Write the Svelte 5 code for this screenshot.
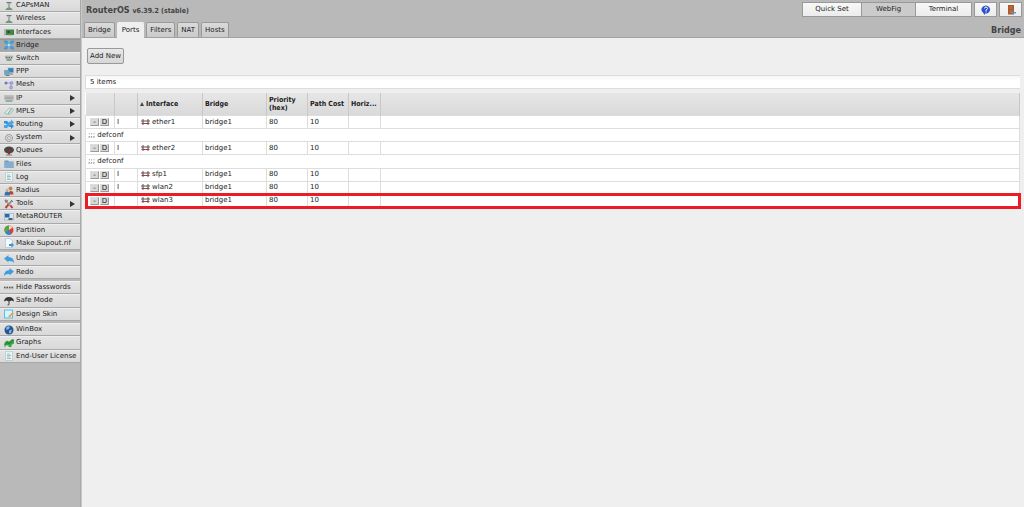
<script>
  const groups = [
    [
      { label: 'CAPsMAN', icon: 'antenna' },
      { label: 'Wireless', icon: 'antenna' },
      { label: 'Interfaces', icon: 'card' },
      { label: 'Bridge', icon: 'bridge', active: true },
      { label: 'Switch', icon: 'switch' },
      { label: 'PPP', icon: 'ppp' },
      { label: 'Mesh', icon: 'mesh' },
      { label: 'IP', icon: 'ip', sub: true },
      { label: 'MPLS', icon: 'mpls', sub: true },
      { label: 'Routing', icon: 'routing', sub: true },
      { label: 'System', icon: 'gear', sub: true },
      { label: 'Queues', icon: 'tree' },
      { label: 'Files', icon: 'folder' },
      { label: 'Log', icon: 'page' },
      { label: 'Radius', icon: 'users' },
      { label: 'Tools', icon: 'tools', sub: true },
      { label: 'MetaROUTER', icon: 'meta' },
      { label: 'Partition', icon: 'pie' },
      { label: 'Make Supout.rif', icon: 'supout' }
    ],
    [
      { label: 'Undo', icon: 'undo' },
      { label: 'Redo', icon: 'redo' }
    ],
    [
      { label: 'Hide Passwords', icon: 'stars' },
      { label: 'Safe Mode', icon: 'umbrella' },
      { label: 'Design Skin', icon: 'design' }
    ],
    [
      { label: 'WinBox', icon: 'globe' },
      { label: 'Graphs', icon: 'graph' },
      { label: 'End-User License', icon: 'page' }
    ]
  ];

  const tabs = ['Bridge', 'Ports', 'Filters', 'NAT', 'Hosts'];

  const rows = [
    { flag: 'I', name: 'ether1' },
    { comment: ';;; defconf' },
    { flag: 'I', name: 'ether2' },
    { comment: ';;; defconf' },
    { flag: 'I', name: 'sfp1' },
    { flag: 'I', name: 'wlan2' },
    { flag: '', name: 'wlan3', marked: true }
  ];

  let tab = $state('Ports');
</script>

{#snippet icon(name)}
  <svg class="icon" viewBox="0 0 20 20" aria-hidden="true">
    {#if name === 'antenna'}
      <path d="M5 3h10M10 3v12" stroke="#777" stroke-width="2" fill="none" />
      <path d="M6 4l4 5 4-5" stroke="#aaa" stroke-width="1.5" fill="none" />
      <path d="M3 18q0-4 7-5 7 1 7 5z" fill="#6f9a72" />
    {:else if name === 'card'}
      <path d="M2 4v13" stroke="#888" stroke-width="2" />
      <rect x="4" y="5" width="16" height="11" fill="#3c8546" />
      <rect x="7" y="8" width="4" height="4" fill="#1d4f25" />
      <path d="M7 16h10" stroke="#9aa860" stroke-width="1.5" />
    {:else if name === 'bridge'}
      <path d="M0 1l8 1-6 6zM20 1l-8 1 6 6zM0 19l8-1-6-6zM20 19l-8-1 6-6z" fill="#2e93d8" />
      <path d="M3 3l14 14M17 3L3 17" stroke="#3d9fdc" stroke-width="4" />
      <circle cx="10" cy="10" r="3" fill="#b9dff5" />
    {:else if name === 'switch'}
      <path d="M2 6h16l-2 6H4z" fill="#bbb" stroke="#999" />
      <path d="M4 9h3M9 9h3M14 9h2" stroke="#666" stroke-width="2" />
      <path d="M5 14h10" stroke="#63996a" stroke-width="3" />
    {:else if name === 'ip'}
      <path d="M1 5h18v8H1z" fill="#c8c8c8" stroke="#aaa" />
      <path d="M4 7v5M8 7v5M12 7v5M16 7v5" stroke="#777" stroke-width="1.5" />
      <path d="M3 16h14" stroke="#7fa384" stroke-width="3" />
    {:else if name === 'ppp'}
      <rect x="8" y="2" width="11" height="9" fill="#2e86bd" stroke="#9ab" />
      <rect x="1" y="7" width="10" height="8" fill="#55acd9" stroke="#888" />
      <path d="M3 17h8M12 14h6" stroke="#777" stroke-width="2" />
    {:else if name === 'mesh'}
      <path d="M4 6h10v10" stroke="#999" stroke-width="1.5" fill="none" />
      <circle cx="4" cy="6" r="3" fill="#7373d2" />
      <circle cx="15" cy="6" r="3" fill="#aaaaf0" stroke="#7777c8" />
      <circle cx="14" cy="15" r="3" fill="#aaaaf0" stroke="#7777c8" />
    {:else if name === 'mpls'}
      <path d="M1 14L11 4l4 1-9 12zM8 16L17 5l2 3-8 9z" fill="#dcebe5" stroke="#8dafa4" stroke-width="1.5" />
    {:else if name === 'routing'}
      <path d="M0 4h6l8 8V9l6 5-6 6v-4h-3L4 9H0z" fill="#2f91d8" />
      <path d="M0 18h6l8-8v3l6-6-6-6v4h-3l-7 7H0z" fill="#48a5e8" />
    {:else if name === 'gear'}
      <circle cx="10" cy="10" r="7" fill="#d5d5d5" stroke="#888" stroke-width="2" stroke-dasharray="3 1" />
      <circle cx="10" cy="10" r="3" fill="#eee" stroke="#999" stroke-width="1.5" />
    {:else if name === 'tree'}
      <ellipse cx="10" cy="8" rx="10" ry="7" fill="#4a4744" />
      <path d="M8 7h4v10H8z" fill="#8a3030" />
      <path d="M4 18h12" stroke="#777" stroke-width="2" />
    {:else if name === 'folder'}
      <path d="M1 3h7l2 2h9v13H1z" fill="#7299bb" />
      <path d="M1 6h18v12H1z" fill="#86add0" />
    {:else if name === 'page'}
      <path d="M3 1h14v18H3z" fill="#e9f4f4" stroke="#9bbcbd" />
      <path d="M6 6h6M6 9h8M6 12h6M6 15h8" stroke="#86aeb0" stroke-width="1.5" />
    {:else if name === 'users'}
      <circle cx="13" cy="5" r="4" fill="#b98b4d" />
      <path d="M9 17q0-7 5-7t5 7z" fill="#b64335" />
      <circle cx="6" cy="8" r="3" fill="#d7b183" />
      <path d="M1 19q0-8 5-8t6 8z" fill="#3173b5" />
    {:else if name === 'tools'}
      <path d="M4 4l13 14" stroke="#999" stroke-width="3" />
      <path d="M16 3l-6 7" stroke="#888" stroke-width="3" />
      <path d="M9 11l-6 7M13 13l4 5" stroke="#c3423e" stroke-width="4" />
      <path d="M2 2l5 1-3 4zM14 2l4 4" stroke="#777" stroke-width="2" fill="none" />
    {:else if name === 'meta'}
      <rect x="1" y="3" width="18" height="13" fill="#dce7f3" stroke="#8199b6" />
      <rect x="2" y="4" width="9" height="7" fill="#246bb1" />
      <path d="M9 14h8" stroke="#333" stroke-width="3" />
    {:else if name === 'pie'}
      <circle cx="10" cy="10" r="9" fill="#e23d39" />
      <path d="M10 10V1a9 9 0 0 0-7 15z" fill="#47ad49" />
      <path d="M10 10l-7 6a9 9 0 0 0 12 2z" fill="#3184cf" />
      <path d="M10 10V1a9 9 0 0 1 7 4z" fill="#f2d4c8" />
    {:else if name === 'supout'}
      <path d="M3 1h9l5 5v13H3z" fill="#f4f9fd" stroke="#8eb2cb" />
      <path d="M10 12h5V9l5 5-5 5v-3h-5z" fill="#3795d8" />
    {:else if name === 'undo'}
      <path d="M0 9l9-7v4q11 0 11 12-3-5-11-4v3z" fill="#419ddd" />
    {:else if name === 'redo'}
      <path d="M20 9l-9-7v4Q0 6 0 18q3-5 11-4v3z" fill="#419ddd" />
    {:else if name === 'stars'}
      <path d="M0 7h20v6H0z" fill="#ccc" />
      <path d="M0 9h20" stroke="#555" stroke-width="3" stroke-dasharray="3 2" />
    {:else if name === 'umbrella'}
      <path d="M0 11Q1 2 10 2t10 9l-5-2-5 2-5-2z" fill="#333" />
      <path d="M10 2v14q0 3-3 2" stroke="#444" stroke-width="2" fill="none" />
    {:else if name === 'design'}
      <rect x="1" y="2" width="16" height="16" fill="#d9f3fc" stroke="#55bfe6" stroke-width="2" />
      <path d="M8 15L17 6l3 3-9 8z" fill="#d7ae51" />
    {:else if name === 'globe'}
      <circle cx="10" cy="10" r="9" fill="#24558f" />
      <path d="M4 5q4-4 8-2l-2 5-5 2zM10 11l6-2-2 7-4 1z" fill="#82b7e5" />
    {:else if name === 'graph'}
      <path d="M1 9l5-4 4 2 7-5 3 1v8l-5 3v4H1z" fill="#37a647" />
      <path d="M1 14l5-5 4 2 8-7" stroke="#19752b" stroke-width="2" fill="none" />
      <path d="M3 15h6v3H3z" fill="#d9efdb" />
    {/if}
  </svg>
{/snippet}

<div class="page">
  <nav class="menu">
    {#each groups as group, i}
      <ul class:main={i === 0} class:pair={group.length === 2}>
        {#each group as item}
          <li>
            <a href="#{item.label}" class:active={item.active}>
              {@render icon(item.icon)}
              <span>{item.label}</span>
              {#if item.sub}<i class="arrow"></i>{/if}
            </a>
          </li>
        {/each}
      </ul>
    {/each}
  </nav>

  <div class="content">
    <header>
      <div class="top">
        <h1>RouterOS <small>v6.39.2 (stable)</small></h1>
        <div class="modes">
          <div class="switcher">
            <button>Quick Set</button>
            <button class="on">WebFig</button>
            <button>Terminal</button>
          </div>
          <button class="tool" aria-label="Help">
            <svg viewBox="0 0 20 20">
              <path d="M10 1a9 8 0 1 1-2 16l-1 3-3-5A9 8 0 0 1 10 1z" fill="#2c50cb" />
              <path d="M7 7q0-3 3-3t3 3q0 2-3 3v2M10 13v2" stroke="#fff" stroke-width="2" fill="none" />
            </svg>
          </button>
          <button class="tool" aria-label="Logout">
            <svg viewBox="0 0 20 20">
              <path d="M4 0h12v19H4z" fill="#a95b2e" />
              <path d="M7 3h6v5H7zM7 10h6v6H7z" fill="#bd6c39" />
              <path d="M11 15l4-3v2h5v3h-5v2z" fill="#4c9cdb" />
            </svg>
          </button>
        </div>
      </div>
      <div class="bar">
        <div class="tabs">
          {#each tabs as name}
            <button class:current={tab === name} onclick={() => (tab = name)}>{name}</button>
          {/each}
        </div>
        <h2>Bridge</h2>
      </div>
    </header>

    <main>
      <button class="add">Add New</button>
      <div class="count">5 items</div>

      <table>
        <colgroup>
          <col class="c-act" /><col class="c-flag" /><col class="c-name" /><col class="c-bridge" />
          <col class="c-num" /><col class="c-num" /><col class="c-hor" /><col />
        </colgroup>
        <thead>
          <tr>
            <th></th>
            <th></th>
            <th><i class="sort"></i>Interface</th>
            <th>Bridge</th>
            <th>Priority (hex)</th>
            <th class="nowrap">Path Cost</th>
            <th class="nowrap">Horiz...</th>
            <th></th>
          </tr>
        </thead>
        <tbody>
          {#each rows as row}
            {#if row.comment}
              <tr><td class="comment" colspan="8">{row.comment}</td></tr>
            {:else}
              <tr class:marked={row.marked}>
                <td class="act"><div><button>-</button><button>D</button></div></td>
                <td>{row.flag}</td>
                <td>
                  <svg class="port" viewBox="0 0 18 12" aria-hidden="true">
                    <path d="M0 4h18M4 0v8M14 0v8" stroke="#555" stroke-width="2" />
                    <path d="M1 9h16M4 7v5M14 7v5" stroke="#a34343" stroke-width="2" />
                  </svg>{row.name}
                </td>
                <td>bridge1</td>
                <td>80</td>
                <td>10</td>
                <td></td>
                <td></td>
              </tr>
            {/if}
          {/each}
        </tbody>
      </table>
    </main>
  </div>
</div>

<style>
  :global(body) {
    margin: 0;
    background: #efefef;
  }

  .page {
    display: flex;
    min-height: 100vh;
    font: 7px/9px "DejaVu Sans", Verdana, sans-serif;
    color: #222;
  }

  button {
    font: inherit;
    color: inherit;
    padding: 0;
    margin: 0;
    box-sizing: border-box;
  }

  /* side menu */
  .menu {
    flex: none;
    width: 81px;
    background: #b9b9b9;
    border-right: 1px solid #a8a8a8;
    box-sizing: border-box;
    overflow: hidden;
  }

  .menu ul {
    display: grid;
    grid-auto-rows: 1fr;
    height: 40px;
    margin: 0 0 2px;
    padding: 0;
    list-style: none;
  }

  .menu ul.main {
    height: 251px;
    margin-top: -1px;
  }

  .menu ul.pair {
    height: 27px;
  }

  .menu li {
    display: grid;
    min-height: 0;
  }

  .menu a {
    display: flex;
    align-items: center;
    gap: 2px;
    padding: 0 5px 0 4px;
    border-top: 1px solid #eee;
    border-bottom: 1px solid #a9a9a9;
    background: linear-gradient(#e3e3e3, #d9d9d9);
    color: #222;
    text-decoration: none;
    white-space: nowrap;
    overflow: hidden;
  }

  .menu a.active {
    background: #a8a8a8;
    border-top-color: #999;
  }

  .icon {
    flex: none;
    width: 10px;
    height: 10px;
  }

  .arrow {
    margin-left: auto;
    border: solid transparent;
    border-width: 3px 0 3px 5px;
    border-left-color: #333;
  }

  /* header */
  .content {
    flex: 1;
    min-width: 0;
    border-left: 1px solid #c9c9c9;
  }

  header {
    background: #b9b9b9;
    border-bottom: 1px solid #a3a3a3;
  }

  .top {
    display: flex;
    justify-content: space-between;
    padding: 2px 2px 0 4px;
    height: 20px;
  }

  h1,
  h2 {
    margin: 0;
    font: bold 9px/16px "DejaVu Sans Condensed", "DejaVu Sans", sans-serif;
    color: #444;
  }

  h1 small {
    font-size: 7px;
  }

  .modes {
    display: flex;
    align-items: flex-start;
    gap: 2px;
  }

  .switcher {
    display: flex;
  }

  .modes button {
    height: 15px;
    border: 1px solid #999;
    background: linear-gradient(#f8f8f8, #ececec);
  }

  .switcher button {
    width: 56px;
    border-left-width: 0;
  }

  .switcher button:first-child {
    width: 60px;
    border-left-width: 1px;
  }

  .switcher button.on {
    width: 54px;
    background: #cbcbcb;
  }

  .modes .tool {
    display: grid;
    place-items: center;
    width: 23px;
  }

  .tool svg {
    width: 10px;
    height: 10px;
  }

  .bar {
    display: flex;
    justify-content: space-between;
    padding: 0 3px 0 2px;
    height: 15px;
  }

  .tabs {
    display: flex;
    align-items: flex-end;
    gap: 2px;
  }

  .tabs button {
    height: 15px;
    padding: 0 3px;
    border: 1px solid #999;
    border-bottom: 0;
    border-radius: 2px 2px 0 0;
    background: linear-gradient(#dadada, #cacaca);
  }

  .tabs .current {
    height: 16px;
    padding: 0 4px;
    margin-bottom: -1px;
    border-color: #efefef;
    background: #efefef;
  }

  /* list */
  main {
    padding: 10px 4px 0 3px;
  }

  .add {
    display: block;
    height: 16px;
    margin-left: 2px;
    padding: 0 2px;
    border: 1px solid #999;
    border-radius: 2px;
    background: linear-gradient(#e9e9e9, #d6d6d6);
  }

  .count {
    margin: 11px 0 4px;
    padding: 2px 4px 1px;
    border: 1px solid #ddd;
    border-width: 1px 0 1px 1px;
    background: linear-gradient(#f6f6f6, #fff 40%);
  }

  table {
    width: 100%;
    height: 115px;
    table-layout: fixed;
    border-collapse: collapse;
    background: #fff;
  }

  .c-act { width: 29px; }
  .c-flag { width: 23px; }
  .c-name { width: 65px; }
  .c-bridge { width: 64px; }
  .c-num { width: 41px; }
  .c-hor { width: 32px; }

  th {
    height: 22px;
    padding: 0 2px;
    border-right: 1px solid #c8c8c8;
    background: linear-gradient(#e6e6e6, #d9d9d9);
    font: bold 7px/8px "DejaVu Sans Condensed", "DejaVu Sans", sans-serif;
    text-align: left;
  }

  td {
    padding: 0 2px;
    border: solid #ddd;
    border-width: 1px 1px 1px 0;
    line-height: 9px;
  }

  td:first-child {
    border-left-width: 1px;
  }

  .nowrap {
    white-space: nowrap;
  }

  .sort {
    display: inline-block;
    margin-right: 2px;
    border: solid transparent;
    border-width: 0 2px 4px;
    border-bottom-color: #444;
  }

  .act div {
    display: flex;
    gap: 1px;
    padding-left: 2px;
  }

  .act button {
    width: 9px;
    height: 8px;
    border: 1px solid;
    border-color: #ddd #999 #999 #ddd;
    background: #d8d8d8;
    line-height: 6px;
  }

  .port {
    width: 9px;
    height: 6px;
    margin: 0 2px 0 1px;
    vertical-align: -1px;
  }

  .marked {
    outline: 3px solid #ed1c24;
    outline-offset: -2px;
  }
</style>
